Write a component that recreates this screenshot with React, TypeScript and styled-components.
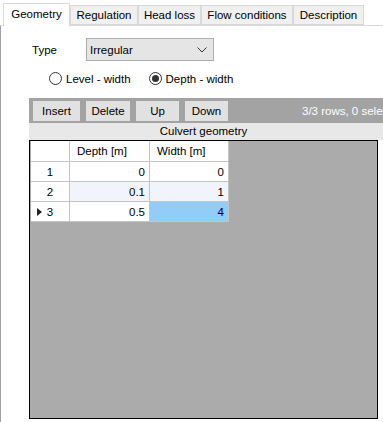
import React from 'react';
import styled, { createGlobalStyle } from 'styled-components';

const font = `"Liberation Sans", Arial, sans-serif`;

const GlobalStyle = createGlobalStyle`
  html, body {
    margin: 0;
    padding: 0;
    background: #ffffff;
  }
  body {
    font-family: ${font};
    font-size: 11.5px;
    color: #000;
  }
`;

const Page = styled.div`
  width: 383px;
  height: 422px;
  overflow: hidden;
  background: #ffffff;
  display: flex;
  flex-direction: column;
`;

const TabStrip = styled.div`
  display: flex;
  align-items: flex-end;
  padding: 2px 0 0 3px;
  height: 23px;
  border-bottom: 1px solid #d9d9d9;
  box-sizing: content-box;
`;

const Tab = styled.div<{ $w: number; $active?: boolean }>`
  width: ${({ $w }) => $w}px;
  height: ${({ $active }) => ($active ? 23 : 20)}px;
  box-sizing: border-box;
  border: 1px solid #d9d9d9;
  border-bottom: ${({ $active }) => ($active ? 'none' : '1px solid #d9d9d9')};
  margin-bottom: ${({ $active }) => ($active ? -1 : 0)}px;
  background: ${({ $active }) => ($active ? '#ffffff' : '#f0f0f0')};
  display: flex;
  align-items: center;
  justify-content: center;
  padding-bottom: ${({ $active }) => ($active ? 2 : 0)}px;
  color: #000;
  white-space: nowrap;
  position: relative;
  z-index: ${({ $active }) => ($active ? 1 : 0)};
`;

const Panel = styled.div`
  flex: 1;
  border-left: 1px solid #a0a0a8;
  display: flex;
  flex-direction: column;
`;

const TypeRow = styled.div`
  display: flex;
  align-items: center;
  margin-top: 12px;
  padding-left: 31px;
`;

const Label = styled.span`
  width: 54px;
`;

const Select = styled.div`
  width: 128px;
  height: 23px;
  box-sizing: border-box;
  background: #e5e5e5;
  border: 1px solid #adadad;
  display: flex;
  align-items: center;
  justify-content: space-between;
  padding: 0 6px 0 3px;
`;

const RadioRow = styled.div`
  display: flex;
  align-items: center;
  margin-top: 9px;
  padding-left: 48px;
  height: 17px;
`;

const RadioOption = styled.label`
  display: flex;
  align-items: center;
  gap: 4px;
  margin-right: 18px;
`;

const RadioCircle = styled.span<{ $checked?: boolean }>`
  width: 13px;
  height: 13px;
  box-sizing: border-box;
  border: 1px solid #333333;
  border-radius: 50%;
  background: #ffffff;
  display: flex;
  align-items: center;
  justify-content: center;
  &::after {
    content: '';
    display: ${({ $checked }) => ($checked ? 'block' : 'none')};
    width: 7px;
    height: 7px;
    border-radius: 50%;
    background: #333333;
  }
`;

const GridArea = styled.div`
  margin-top: 11px;
  margin-left: 28px;
  width: 380px;
  display: flex;
  flex-direction: column;
`;

const Toolbar = styled.div`
  height: 25px;
  box-sizing: border-box;
  background: #a3a3a3;
  display: flex;
  align-items: flex-start;
  padding: 3px 0 0 4px;
  gap: 6px;
`;

const ToolButton = styled.button<{ $w: number }>`
  width: ${({ $w }) => $w}px;
  height: 20px;
  border: none;
  background: #e1e1e1;
  font-family: ${font};
  font-size: 11.5px;
  color: #000;
  padding: 0;
`;

const Status = styled.span`
  margin-left: 68px;
  line-height: 20px;
  color: #ffffff;
  white-space: nowrap;
`;

const Caption = styled.div`
  height: 17px;
  background: #e8e8e8;
  padding-right: 31px;
  text-align: center;
  line-height: 16px;
`;

const GridBox = styled.div`
  width: 349px;
  height: 279px;
  box-sizing: border-box;
  border: 1px solid #000000;
  background: #ababab;
  padding: 0 0 0 1px;
`;

const Table = styled.div`
  display: grid;
  grid-template-columns: 39px 80px 79px;
  grid-auto-rows: 20px;
  grid-template-rows: 21px;
  width: max-content;
`;

const Cell = styled.div<{ $kind: 'head' | 'rowhead' | 'num'; $alt?: boolean; $selected?: boolean }>`
  box-sizing: border-box;
  border-right: 1px solid #c4c4c4;
  border-bottom: 1px solid #c4c4c4;
  display: flex;
  align-items: center;
  white-space: nowrap;
  background: ${({ $selected, $alt }) => ($selected ? '#91cdf7' : $alt ? '#f1f5fb' : '#ffffff')};
  justify-content: ${({ $kind }) =>
    $kind === 'num' ? 'flex-end' : $kind === 'rowhead' ? 'center' : 'flex-start'};
  padding: ${({ $kind }) => ($kind === 'num' ? '0 4px 0 0' : $kind === 'head' ? '0 0 0 7px' : '0')};
  position: relative;
`;

const RowMarker = styled.span`
  position: absolute;
  left: 6px;
  top: 6px;
  width: 0;
  height: 0;
  border-top: 4px solid transparent;
  border-bottom: 4px solid transparent;
  border-left: 5px solid #222;
`;

const rows = [
  { n: 1, depth: '0', width: '0' },
  { n: 2, depth: '0.1', width: '1' },
  { n: 3, depth: '0.5', width: '4' },
];

export default function App() {
  return (
    <>
      <GlobalStyle />
      <Page>
        <TabStrip>
          <Tab $w={67} $active>Geometry</Tab>
          <Tab $w={68}>Regulation</Tab>
          <Tab $w={63}>Head loss</Tab>
          <Tab $w={92}>Flow conditions</Tab>
          <Tab $w={71}>Description</Tab>
        </TabStrip>
        <Panel>
          <TypeRow>
            <Label>Type</Label>
            <Select>
              <span>Irregular</span>
              <svg width="10" height="6" viewBox="0 0 10 6">
                <path d="M0.5 0.5 L5 5 L9.5 0.5" fill="none" stroke="#333" strokeWidth="1" />
              </svg>
            </Select>
          </TypeRow>
          <RadioRow>
            <RadioOption>
              <RadioCircle />
              Level - width
            </RadioOption>
            <RadioOption>
              <RadioCircle $checked />
              Depth - width
            </RadioOption>
          </RadioRow>
          <GridArea>
            <Toolbar>
              <ToolButton $w={47}>Insert</ToolButton>
              <ToolButton $w={44}>Delete</ToolButton>
              <ToolButton $w={43}>Up</ToolButton>
              <ToolButton $w={43}>Down</ToolButton>
              <Status>3/3 rows, 0 selected</Status>
            </Toolbar>
            <Caption>Culvert geometry</Caption>
            <GridBox>
              <Table>
                <Cell $kind="head" />
                <Cell $kind="head">Depth [m]</Cell>
                <Cell $kind="head">Width [m]</Cell>
                {rows.map((r) => (
                  <React.Fragment key={r.n}>
                    <Cell $kind="rowhead">
                      {r.n === 3 && <RowMarker />}
                      {r.n}
                    </Cell>
                    <Cell $kind="num" $alt={r.n === 2}>{r.depth}</Cell>
                    <Cell $kind="num" $alt={r.n === 2} $selected={r.n === 3}>{r.width}</Cell>
                  </React.Fragment>
                ))}
              </Table>
            </GridBox>
          </GridArea>
        </Panel>
      </Page>
    </>
  );
}
